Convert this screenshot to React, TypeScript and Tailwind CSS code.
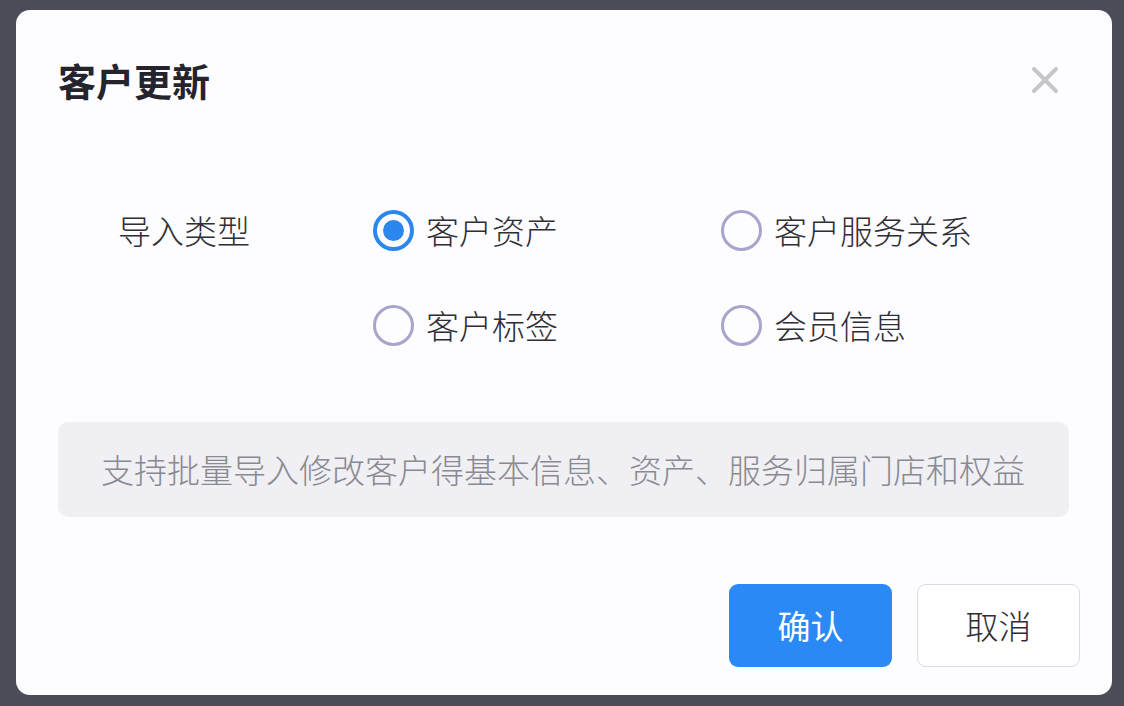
import React, { useState } from "react";

const options = [
    { key: "asset", label: "客户资产" },
    { key: "service", label: "客户服务关系" },
    { key: "tag", label: "客户标签" },
    { key: "member", label: "会员信息" },
];

const Radio: React.FC<{ checked: boolean; label: string; onSelect: () => void }> = ({ checked, label, onSelect }) => (
    <button type="button" onClick={onSelect} className="flex items-center gap-3 h-[48px] w-[348px] text-left">
        {checked ? (
            <span className="w-[41px] h-[41px] rounded-full border-[4px] border-[#2b86ee] flex items-center justify-center">
                <span className="w-[21px] h-[21px] rounded-full bg-[#2b86ee]" />
            </span>
        ) : (
            <span className="w-[41px] h-[41px] rounded-full border-[3px] border-[#a7a5cb]" />
        )}
        <span className="text-[33px] font-light text-[#2e2e33] leading-none">{label}</span>
    </button>
);

const App: React.FC = () => {
    const [type, setType] = useState("asset");

    return (
        <div
            className="w-[1124px] h-[706px] bg-[#4a4c57] pt-[10px] pl-4 pr-3 pb-[11px]"
            style={{ fontFamily: '"Noto Sans CJK SC", "Noto Sans", sans-serif' }}
        >
            <div className="h-full bg-[#fdfcff] rounded-[14px] pt-[46px] pl-[42px] pr-[32px] pb-[28px]">
                <div className="flex items-center justify-between h-[48px] pr-[19px]">
                    <h1 className="text-[38px] font-bold text-[#25242c] leading-none">客户更新</h1>
                    <svg width="28" height="28" viewBox="0 0 28 28" className="mr-[2px]">
                        <path d="M3 3 L25 25 M25 3 L3 25" stroke="#c6c6ca" strokeWidth="4" strokeLinecap="round" />
                    </svg>
                </div>

                <div className="flex mt-[102px] ml-[60px]">
                    <div className="w-[255px] h-[48px] flex items-center text-[33px] font-light text-[#2e2e33] leading-none">导入类型</div>
                    <div className="grid grid-cols-2 gap-y-[47px]">
                        {options.map((o) => (
                            <Radio key={o.key} label={o.label} checked={type === o.key} onSelect={() => setType(o.key)} />
                        ))}
                    </div>
                </div>

                <div className="mt-[73px] mr-[11px] h-[95px] rounded-[10px] bg-[#efeff4] flex items-center pl-[43px] text-[33px] font-light text-[#8a898f] leading-none">
                    支持批量导入修改客户得基本信息、资产、服务归属门店和权益
                </div>

                <div className="mt-[67px] flex justify-end gap-[25px]">
                    <button className="w-[163px] h-[83px] rounded-[9px] bg-[#2a89f5] text-white text-[33px] leading-none">确认</button>
                    <button className="w-[163px] h-[83px] rounded-[9px] border border-[#dcdce0] bg-white text-[#2e2e33] text-[33px] font-light leading-none">取消</button>
                </div>
            </div>
        </div>
    );
};

export default App;
